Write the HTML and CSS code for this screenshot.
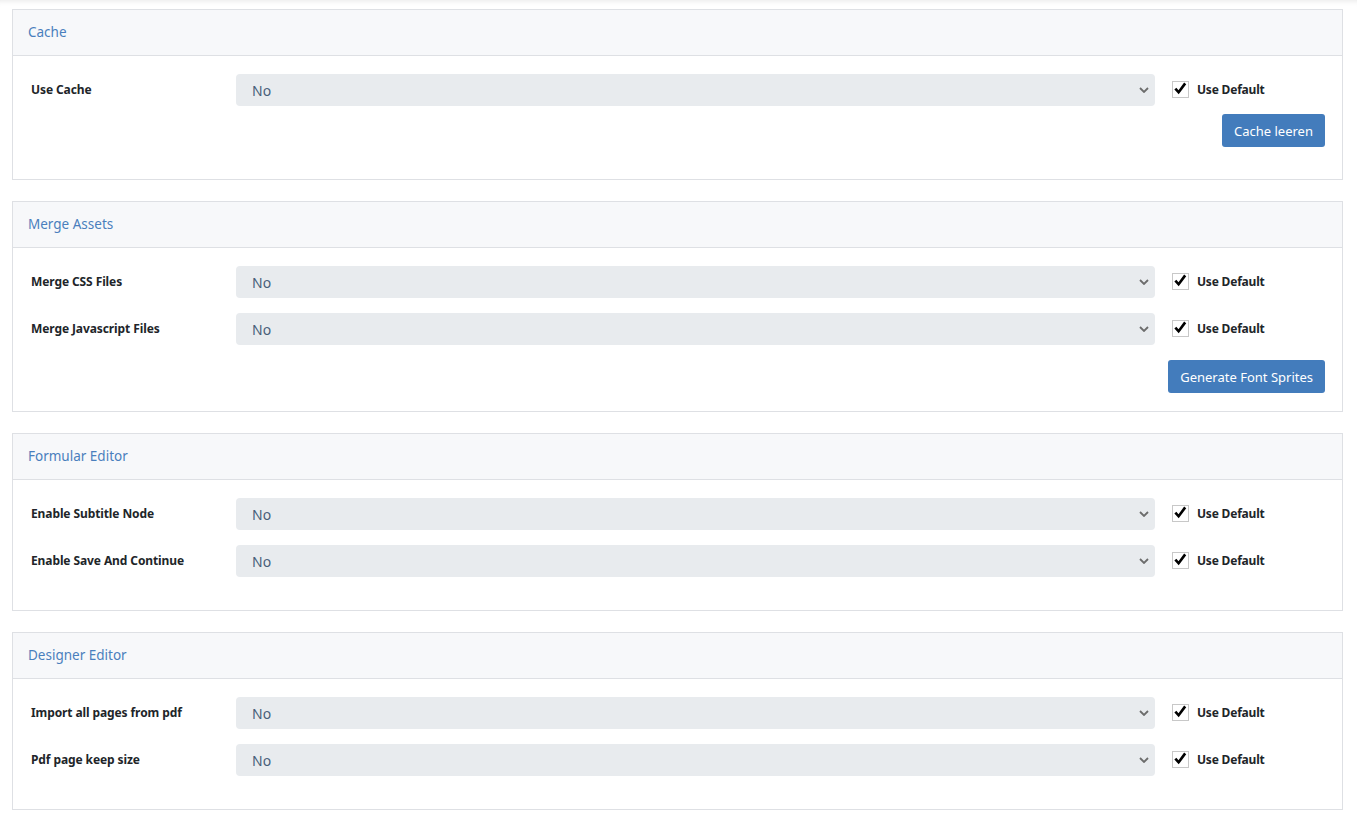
FILE: index.html
```html
<!DOCTYPE html>
<html lang="de">
  <head>
    <title>Einstellungen</title>
    <meta name="viewport" content="width=device-width, initial-scale=1" />
    <link rel="stylesheet" href="styles.css">
  </head>
  <body>
    <div class="seite">

      <section class="panel">
        <header class="panel-kopf"><h2>Cache</h2></header>
        <div class="panel-inhalt eng">
          <div class="zeile">
            <label class="zeile-label">Use Cache</label>
            <div class="auswahl">
              <select><option>No</option><option>Yes</option></select>
              <svg class="pfeil" viewBox="0 0 10 6" width="10" height="6"><path d="M1 1l4 4 4-4" fill="none" stroke="#6c6c6c" stroke-width="1.8"/></svg>
            </div>
            <label class="standard">
              <span class="box"><svg viewBox="0 0 16 16" width="16" height="16"><path d="M2.5 7.5l3.5 4 7-9.5" fill="none" stroke="#000" stroke-width="2.8"/></svg></span>
              Use Default
            </label>
          </div>
          <div class="aktionen"><button class="knopf">Cache leeren</button></div>
        </div>
      </section>

      <section class="panel">
        <header class="panel-kopf"><h2>Merge Assets</h2></header>
        <div class="panel-inhalt">
          <div class="zeile">
            <label class="zeile-label">Merge CSS Files</label>
            <div class="auswahl">
              <select><option>No</option><option>Yes</option></select>
              <svg class="pfeil" viewBox="0 0 10 6" width="10" height="6"><path d="M1 1l4 4 4-4" fill="none" stroke="#6c6c6c" stroke-width="1.8"/></svg>
            </div>
            <label class="standard">
              <span class="box"><svg viewBox="0 0 16 16" width="16" height="16"><path d="M2.5 7.5l3.5 4 7-9.5" fill="none" stroke="#000" stroke-width="2.8"/></svg></span>
              Use Default
            </label>
          </div>
          <div class="zeile">
            <label class="zeile-label">Merge Javascript Files</label>
            <div class="auswahl">
              <select><option>No</option><option>Yes</option></select>
              <svg class="pfeil" viewBox="0 0 10 6" width="10" height="6"><path d="M1 1l4 4 4-4" fill="none" stroke="#6c6c6c" stroke-width="1.8"/></svg>
            </div>
            <label class="standard">
              <span class="box"><svg viewBox="0 0 16 16" width="16" height="16"><path d="M2.5 7.5l3.5 4 7-9.5" fill="none" stroke="#000" stroke-width="2.8"/></svg></span>
              Use Default
            </label>
          </div>
          <div class="aktionen"><button class="knopf">Generate Font Sprites</button></div>
        </div>
      </section>

      <section class="panel">
        <header class="panel-kopf"><h2>Formular Editor</h2></header>
        <div class="panel-inhalt ohne-knopf">
          <div class="zeile">
            <label class="zeile-label">Enable Subtitle Node</label>
            <div class="auswahl">
              <select><option>No</option><option>Yes</option></select>
              <svg class="pfeil" viewBox="0 0 10 6" width="10" height="6"><path d="M1 1l4 4 4-4" fill="none" stroke="#6c6c6c" stroke-width="1.8"/></svg>
            </div>
            <label class="standard">
              <span class="box"><svg viewBox="0 0 16 16" width="16" height="16"><path d="M2.5 7.5l3.5 4 7-9.5" fill="none" stroke="#000" stroke-width="2.8"/></svg></span>
              Use Default
            </label>
          </div>
          <div class="zeile">
            <label class="zeile-label">Enable Save And Continue</label>
            <div class="auswahl">
              <select><option>No</option><option>Yes</option></select>
              <svg class="pfeil" viewBox="0 0 10 6" width="10" height="6"><path d="M1 1l4 4 4-4" fill="none" stroke="#6c6c6c" stroke-width="1.8"/></svg>
            </div>
            <label class="standard">
              <span class="box"><svg viewBox="0 0 16 16" width="16" height="16"><path d="M2.5 7.5l3.5 4 7-9.5" fill="none" stroke="#000" stroke-width="2.8"/></svg></span>
              Use Default
            </label>
          </div>
        </div>
      </section>

      <section class="panel">
        <header class="panel-kopf"><h2>Designer Editor</h2></header>
        <div class="panel-inhalt ohne-knopf">
          <div class="zeile">
            <label class="zeile-label">Import all pages from pdf</label>
            <div class="auswahl">
              <select><option>No</option><option>Yes</option></select>
              <svg class="pfeil" viewBox="0 0 10 6" width="10" height="6"><path d="M1 1l4 4 4-4" fill="none" stroke="#6c6c6c" stroke-width="1.8"/></svg>
            </div>
            <label class="standard">
              <span class="box"><svg viewBox="0 0 16 16" width="16" height="16"><path d="M2.5 7.5l3.5 4 7-9.5" fill="none" stroke="#000" stroke-width="2.8"/></svg></span>
              Use Default
            </label>
          </div>
          <div class="zeile">
            <label class="zeile-label">Pdf page keep size</label>
            <div class="auswahl">
              <select><option>No</option><option>Yes</option></select>
              <svg class="pfeil" viewBox="0 0 10 6" width="10" height="6"><path d="M1 1l4 4 4-4" fill="none" stroke="#6c6c6c" stroke-width="1.8"/></svg>
            </div>
            <label class="standard">
              <span class="box"><svg viewBox="0 0 16 16" width="16" height="16"><path d="M2.5 7.5l3.5 4 7-9.5" fill="none" stroke="#000" stroke-width="2.8"/></svg></span>
              Use Default
            </label>
          </div>
        </div>
      </section>

    </div>
  </body>
</html>
```

FILE: styles.css
```css
body {
  margin: 0;
  background-color: #fff;
  font-family: "Noto Sans", "Open Sans", sans-serif;
  color: #212529;
  box-shadow: inset 0 6px 6px -6px rgba(0, 0, 0, 0.12);
}

.seite {
  padding: 9px 14px 0 12px;
  display: flex;
  flex-direction: column;
  gap: 21px;
}

.panel {
  border: 1px solid #dee0e4;
  background-color: #fff;
}

.panel-kopf {
  height: 45px;
  background-color: #f7f8fa;
  border-bottom: 1px solid #dee0e4;
  display: flex;
  align-items: center;
  padding-left: 15px;
}

.panel-kopf h2 {
  margin: 0 0 1px 0;
  font-size: 13.5px;
  font-weight: 400;
  color: #4a7fbd;
}

.panel-inhalt {
  padding: 18px 17px 18px 18px;
  display: flex;
  flex-direction: column;
  gap: 15px;
}

.panel-inhalt.eng {
  gap: 8px;
  padding-bottom: 32px;
}

.panel-inhalt.ohne-knopf {
  padding-bottom: 33px;
}

.zeile {
  display: grid;
  grid-template-columns: 205px 1fr 170px;
  align-items: center;
}

.zeile-label {
  font-size: 12px;
  font-weight: 700;
  letter-spacing: -0.1px;
  margin-top: -2px;
}

.auswahl {
  position: relative;
}

.auswahl select {
  width: 100%;
  height: 32px;
  appearance: none;
  border: none;
  border-radius: 4px;
  background-color: #e8ebee;
  padding: 0 16px;
  font-family: "Noto Sans", sans-serif;
  font-size: 14px;
  color: #495f7a;
}

.pfeil {
  position: absolute;
  right: 6px;
  top: 13px;
  pointer-events: none;
}

.standard {
  margin-left: 17px;
  display: flex;
  align-items: center;
  gap: 8px;
  font-size: 12px;
  font-weight: 700;
  letter-spacing: -0.2px;
  margin-top: -2px;
}

.box {
  width: 15px;
  height: 15px;
  border: 1px solid #c8c8c8;
  display: flex;
  align-items: center;
  justify-content: center;
}

.aktionen {
  display: flex;
  justify-content: flex-end;
}

.knopf {
  background-color: #437cbc;
  border: none;
  border-radius: 3px;
  color: #fff;
  font-family: "Noto Sans", sans-serif;
  font-size: 13px;
  height: 33px;
  padding: 0 12px;
  cursor: pointer;
}
```
